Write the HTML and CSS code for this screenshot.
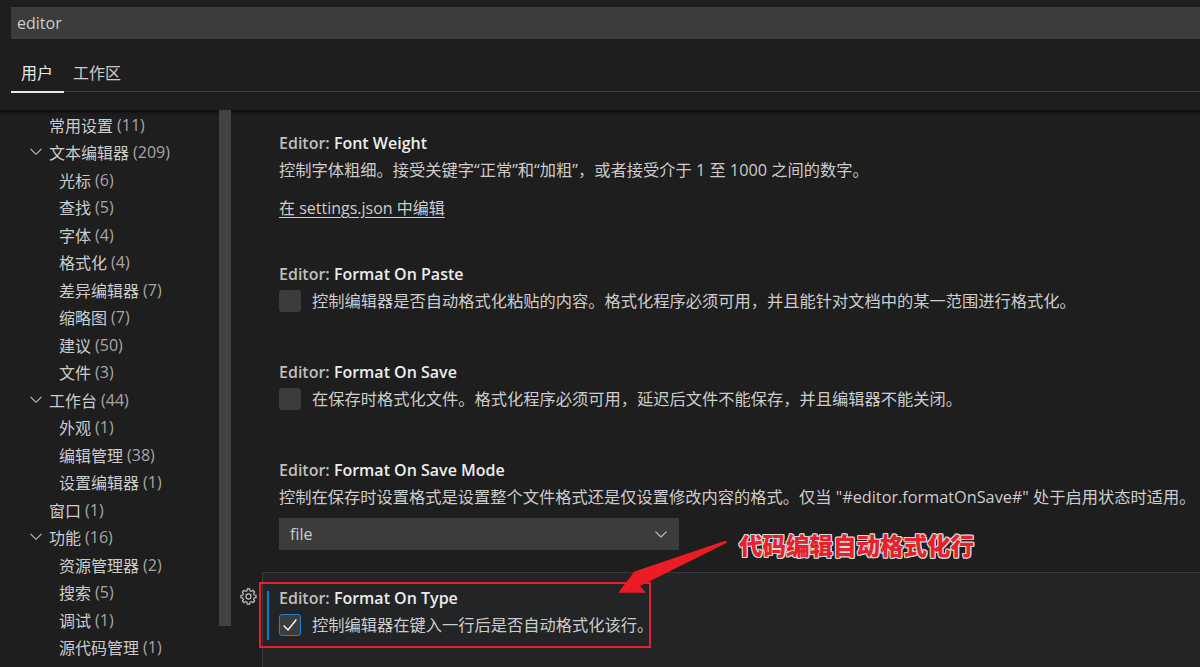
FILE: index.html
```html
<!DOCTYPE html>
<html lang="zh-CN">
<head>
<meta charset="utf-8">
<title>Settings</title>
<link rel="stylesheet" href="styles.css">
</head>
<body>
<div class="page">
  <header class="header">
    <div class="search">editor</div>
    <div class="tabs">
      <div class="tab active">用户</div>
      <div class="tab">工作区</div>
    </div>
  </header>
  <div class="body">
    <nav class="toc">
      <div class="toc-row l0"><span class="name">常用设置</span><span class="count">(11)</span></div>
      <div class="toc-row l0 exp"><svg class="chev" viewBox="0 0 12 8"><polyline points="0.5,0.8 6,6.3 11.5,0.8"/></svg><span class="name">文本编辑器</span><span class="count">(209)</span></div>
      <div class="toc-row l1"><span class="name">光标</span><span class="count">(6)</span></div>
      <div class="toc-row l1"><span class="name">查找</span><span class="count">(5)</span></div>
      <div class="toc-row l1"><span class="name">字体</span><span class="count">(4)</span></div>
      <div class="toc-row l1"><span class="name">格式化</span><span class="count">(4)</span></div>
      <div class="toc-row l1"><span class="name">差异编辑器</span><span class="count">(7)</span></div>
      <div class="toc-row l1"><span class="name">缩略图</span><span class="count">(7)</span></div>
      <div class="toc-row l1"><span class="name">建议</span><span class="count">(50)</span></div>
      <div class="toc-row l1"><span class="name">文件</span><span class="count">(3)</span></div>
      <div class="toc-row l0 exp"><svg class="chev" viewBox="0 0 12 8"><polyline points="0.5,0.8 6,6.3 11.5,0.8"/></svg><span class="name">工作台</span><span class="count">(44)</span></div>
      <div class="toc-row l1"><span class="name">外观</span><span class="count">(1)</span></div>
      <div class="toc-row l1"><span class="name">编辑管理</span><span class="count">(38)</span></div>
      <div class="toc-row l1"><span class="name">设置编辑器</span><span class="count">(1)</span></div>
      <div class="toc-row l0"><span class="name">窗口</span><span class="count">(1)</span></div>
      <div class="toc-row l0 exp"><svg class="chev" viewBox="0 0 12 8"><polyline points="0.5,0.8 6,6.3 11.5,0.8"/></svg><span class="name">功能</span><span class="count">(16)</span></div>
      <div class="toc-row l1"><span class="name">资源管理器</span><span class="count">(2)</span></div>
      <div class="toc-row l1"><span class="name">搜索</span><span class="count">(5)</span></div>
      <div class="toc-row l1"><span class="name">调试</span><span class="count">(1)</span></div>
      <div class="toc-row l1"><span class="name">源代码管理</span><span class="count">(1)</span></div>
    </nav>
    <div class="toc-scroll"><div class="slider"></div></div>
    <main class="list">
      <section class="setting">
        <div class="title"><span class="cat">Editor: </span><span class="label">Font Weight</span></div>
        <div class="desc">控制字体粗细。接受关键字“正常”和“加粗”，或者接受介于 1 至 1000 之间的数字。</div>
        <div class="link-row"><span class="link">在 settings.json 中编辑</span></div>
      </section>
      <section class="setting">
        <div class="title"><span class="cat">Editor: </span><span class="label">Format On Paste</span></div>
        <div class="check-row"><span class="checkbox"></span><span class="desc">控制编辑器是否自动格式化粘贴的内容。格式化程序必须可用，并且能针对文档中的某一范围进行格式化。</span></div>
      </section>
      <section class="setting">
        <div class="title"><span class="cat">Editor: </span><span class="label">Format On Save</span></div>
        <div class="check-row"><span class="checkbox"></span><span class="desc">在保存时格式化文件。格式化程序必须可用，延迟后文件不能保存，并且编辑器不能关闭。</span></div>
      </section>
      <section class="setting">
        <div class="title"><span class="cat">Editor: </span><span class="label">Format On Save Mode</span></div>
        <div class="desc">控制在保存时设置格式是设置整个文件格式还是仅设置修改内容的格式。仅当 "#editor.formatOnSave#" 处于启用状态时适用。</div>
        <div class="select"><span>file</span><svg class="select-chev" viewBox="0 0 12 7"><polyline points="0.5,0.6 6,6 11.5,0.6"/></svg></div>
      </section>
      <section class="setting focused">
        <svg class="gear" viewBox="0 0 16 16"><path d="M13.31 6.58L15.11 6.87L15.11 9.13L13.31 9.42L12.76 10.75L13.82 12.23L12.23 13.82L10.75 12.76L9.42 13.31L9.13 15.11L6.87 15.11L6.58 13.31L5.25 12.76L3.77 13.82L2.18 12.23L3.24 10.75L2.69 9.42L0.89 9.13L0.89 6.87L2.69 6.58L3.24 5.25L2.18 3.77L3.77 2.18L5.25 3.24L6.58 2.69L6.87 0.89L9.13 0.89L9.42 2.69L10.75 3.24L12.23 2.18L13.82 3.77L12.76 5.25Z"/><circle cx="8" cy="8" r="2.4"/></svg>
        <div class="title"><span class="cat">Editor: </span><span class="label">Format On Type</span></div>
        <div class="check-row"><span class="checkbox checked"><svg viewBox="0 0 22 22"><polyline points="4,11.5 8.8,16.5 18,5"/></svg></span><span class="desc">控制编辑器在键入一行后是否自动格式化该行。</span></div>
      </section>
    </main>
  </div>
  <div class="red-box"></div>
  <svg class="arrow" viewBox="0 0 140 70"><polygon points="126,10.6 34.5,41.5 18.3,62.7 46,62.7 40,56 127,12.8"/></svg>
  <div class="annotation">代码编辑自动格式化行</div>
</div>
</body>
</html>
```

FILE: styles.css
```css
html, body {
  margin: 0;
  padding: 0;
  background: #1e1e1e;
  overflow: hidden;
}

.page {
  position: relative;
  width: 1200px;
  height: 667px;
  display: flex;
  flex-direction: column;
  font-family: "Open Sans", "Noto Sans CJK SC", sans-serif;
  font-size: 16px;
  color: #cccccc;
  overflow: hidden;
}

.header {
  padding-top: 7px;
  flex: none;
}

.search {
  margin-left: 11px;
  margin-right: -20px;
  height: 32px;
  line-height: 32px;
  padding-left: 6px;
  background: #3c3c3c;
  color: #cccccc;
}

.tabs {
  display: flex;
  margin-top: 14px;
  margin-bottom: 18px;
  margin-left: 11px;
  margin-right: -20px;
  height: 39px;
  box-sizing: border-box;
  border-bottom: 1px solid #444444;
}

.tab {
  height: 40px;
  box-sizing: border-box;
  padding: 2px 11px 0 10px;
  line-height: 36px;
  color: #cccccc;
}

.tab.active {
  color: #e7e7e7;
  border-bottom: 2px solid #e7e7e7;
}

.tab + .tab {
  padding-left: 9px;
}

.body {
  flex: 1;
  min-height: 0;
  display: flex;
  box-shadow: inset 0 5px 4px -3px #0c0c0c;
}

.toc {
  width: 219px;
  flex: none;
  padding-top: 1px;
}

.toc-row {
  height: 27.5px;
  display: flex;
  align-items: center;
  white-space: nowrap;
}

.toc-row.l0 { padding-left: 49px; }
.toc-row.l0.exp { padding-left: 30px; }
.toc-row.l1 { padding-left: 59px; }

.chev {
  width: 12px;
  height: 8px;
  margin-right: 7px;
  fill: none;
  stroke: #c5c5c5;
  stroke-width: 1.1;
}

.name { color: #cccccc; }
.count { color: #a6a6a6; margin-left: 4px; }

.toc-scroll {
  width: 12px;
  flex: none;
}

.slider {
  height: 516px;
  background: #424242;
}

.list {
  flex: 1;
  display: flex;
  flex-direction: column;
  padding-top: 7px;
}

.setting {
  position: relative;
  margin-left: 31px;
  padding: 12px 0 22px 16px;
  border-top: 1px solid transparent;
  border-left: 1px solid transparent;
}

.setting.focused {
  flex: 1;
  background: #232426;
  border-top-color: #3a3a3a;
  border-left-color: #3a3a3a;
}

.setting.focused::before {
  content: "";
  position: absolute;
  left: 4px;
  top: 18px;
  width: 2px;
  height: 49px;
  background: #0f7dc2;
}

.title {
  line-height: 27px;
  font-weight: 600;
  white-space: nowrap;
}

.cat { color: #bfbfbf; }
.label { color: #ececec; }

.desc {
  font-size: 16.25px;
  line-height: 27px;
  color: #cccccc;
  white-space: nowrap;
}

.link-row {
  margin-top: 11px;
  margin-bottom: 4px;
  line-height: 27px;
}

.link {
  color: #cccccc;
  text-decoration: underline;
  text-underline-offset: 3px;
}

.check-row {
  display: flex;
  align-items: center;
  height: 26px;
  margin-bottom: 10px;
}

.checkbox {
  width: 22px;
  height: 22px;
  box-sizing: border-box;
  border-radius: 3px;
  background: #3c3c3c;
  margin-right: 11px;
  flex: none;
}

.checkbox.checked {
  border: 1px solid #1a85d6;
}

.checkbox svg {
  display: block;
  width: 20px;
  height: 20px;
  fill: none;
  stroke: #ffffff;
  stroke-width: 1.5;
}

.select {
  width: 400px;
  height: 32px;
  margin-top: 7px;
  box-sizing: border-box;
  padding: 0 12px 0 11px;
  background: #3c3c3c;
  display: flex;
  align-items: center;
  justify-content: space-between;
  color: #cccccc;
}

.select-chev {
  width: 12px;
  height: 7px;
  fill: none;
  stroke: #c5c5c5;
  stroke-width: 1.2;
}

.gear {
  position: absolute;
  left: -23px;
  top: 15px;
  width: 17px;
  height: 17px;
  fill: none;
  stroke: #c5c5c5;
  stroke-width: 1.1;
}

.red-box {
  position: absolute;
  left: 259px;
  top: 582px;
  width: 392px;
  height: 66px;
  box-sizing: border-box;
  border: 2px solid #e8202a;
}

.arrow {
  position: absolute;
  left: 600px;
  top: 530px;
  width: 140px;
  height: 70px;
  fill: #ec1c24;
}

.annotation {
  position: absolute;
  left: 739px;
  top: 532px;
  font-family: "Noto Sans CJK SC", sans-serif;
  font-weight: 900;
  font-size: 23.5px;
  line-height: 26px;
  color: #e8202a;
  text-shadow: 1px 0 0 #d9d9d9, -1px 0 0 #d9d9d9, 0 1px 0 #d9d9d9, 0 -1px 0 #d9d9d9, 1px 1px 0 #d9d9d9, -1px -1px 0 #d9d9d9, 1px -1px 0 #d9d9d9, -1px 1px 0 #d9d9d9;
}
```
